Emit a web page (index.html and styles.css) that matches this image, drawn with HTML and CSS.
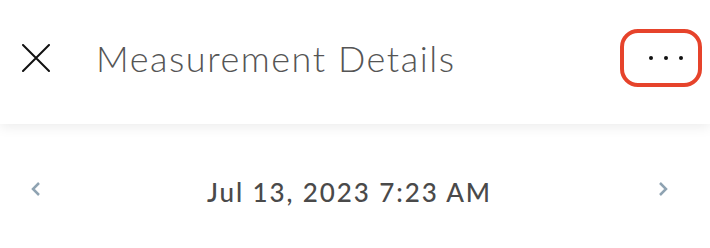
FILE: index.html
```html
<!DOCTYPE html>
<html>
<head>
<meta charset="utf-8">
<link rel="stylesheet" href="styles.css">
</head>
<body>
<header class="topbar">
  <button class="close-btn" aria-label="Close">
    <svg width="28" height="28" viewBox="0 0 28 28"><path d="M1 1 L27 27 M27 1 L1 27" stroke="#111" stroke-width="2" stroke-linecap="round" fill="none"/></svg>
  </button>
  <h1 class="title">Measurement Details</h1>
  <button class="more-btn" aria-label="More">
    <span class="dot"></span><span class="dot"></span><span class="dot"></span>
  </button>
</header>
<section class="date-nav">
  <button class="chev" aria-label="Previous">
    <svg width="10" height="14" viewBox="0 0 10 14"><path d="M8 1 L2 7 L8 13" stroke="#8fa3b2" stroke-width="2.5" fill="none"/></svg>
  </button>
  <div class="date">Jul 13, 2023 7:23 AM</div>
  <button class="chev" aria-label="Next">
    <svg width="10" height="14" viewBox="0 0 10 14"><path d="M2 1 L8 7 L2 13" stroke="#8fa3b2" stroke-width="2.5" fill="none"/></svg>
  </button>
</section>
</body>
</html>
```
FILE: styles.css
```css
* { box-sizing: border-box; }
html, body { margin: 0; padding: 0; background: #fff; }
body { width: 710px; height: 248px; overflow: hidden; font-family: "Lato", "Liberation Sans", sans-serif; }

.topbar {
  height: 124px;
  padding: 0 8px 8px 22px;
  display: flex;
  align-items: center;
  background: #fff;
  box-shadow: 0 3px 12px rgba(0,0,0,0.08);
  position: relative;
}
.close-btn {
  border: 0; background: none; padding: 0; margin: 0;
  width: 28px; height: 28px; display: flex;
}
.title {
  margin: 0 0 0 46px;
  font-weight: 300;
  font-size: 36px;
  color: #555;
  letter-spacing: 1.55px;
}
.more-btn {
  margin-left: auto;
  width: 82px; height: 58px;
  border: 4.5px solid #e6432b;
  border-radius: 18px;
  background: #fff;
  display: flex;
  align-items: center;
  gap: 11px;
  padding: 0 0 0 25px;
}
.dot { width: 4px; height: 4px; border-radius: 50%; background: #111; }

.date-nav {
  margin-top: 44px;
  height: 42px;
  display: flex;
  align-items: center;
  justify-content: space-between;
  padding: 0 42px 0 31px;
}
.chev { border: 0; background: none; padding: 0; display: flex; }
.date {
  margin-top: 6px;
  font-size: 26px;
  font-weight: 500;
  color: #4a4a4a;
  letter-spacing: 1.9px;
}
```
